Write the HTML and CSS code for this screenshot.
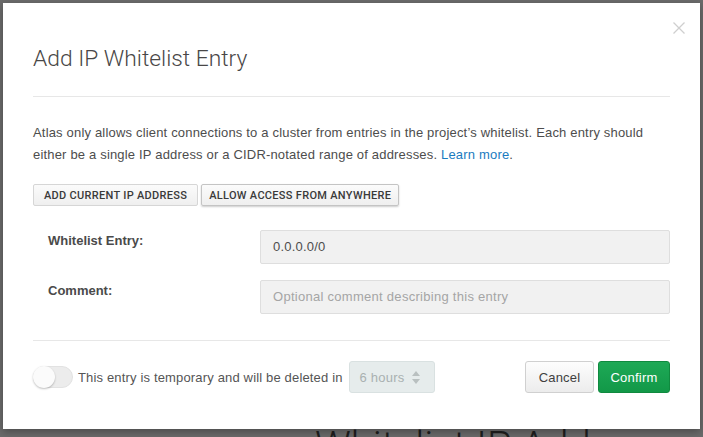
FILE: index.html
```html
<!DOCTYPE html>
<html>
<head>
<meta charset="utf-8">
<link rel="stylesheet" href="styles.css">
</head>
<body>
<div class="backdrop">
  <div class="behind">Whitelist IP Address</div>
  <div class="modal">
    <button class="close" aria-label="Close">
      <svg width="12" height="12" viewBox="0 0 12 12"><path d="M0.5 0.5L11.5 11.5M11.5 0.5L0.5 11.5" stroke="#cfcfcf" stroke-width="1.3" fill="none"/></svg>
    </button>
    <h1 class="title">Add IP Whitelist Entry</h1>
    <div class="rule"></div>
    <p class="desc">Atlas only allows client connections to a cluster from entries in the project’s whitelist. Each entry should either be a single IP address or a CIDR-notated range of addresses. <a class="link">Learn more</a>.</p>
    <div class="quick">
      <button class="qbtn qbtn-current">Add current IP address</button>
      <button class="qbtn active">Allow access from anywhere</button>
    </div>
    <div class="form">
      <div class="row">
        <label class="lbl">Whitelist Entry:</label>
        <div class="input">0.0.0.0/0</div>
      </div>
      <div class="row">
        <label class="lbl">Comment:</label>
        <div class="input placeholder">Optional comment describing this entry</div>
      </div>
    </div>
    <div class="rule rule-foot"></div>
    <div class="footer">
      <div class="temp">
        <span class="toggle"><span class="knob"></span></span>
        <span class="temp-text">This entry is temporary and will be deleted in</span>
        <span class="select">6 hours
          <svg width="8" height="13" viewBox="0 0 8 13"><path d="M4 0L8 5H0Z M4 13L0 8H8Z" fill="#b9c0c0"/></svg>
        </span>
      </div>
      <div class="actions">
        <button class="btn cancel">Cancel</button>
        <button class="btn confirm">Confirm</button>
      </div>
    </div>
  </div>
</div>
</body>
</html>
```
FILE: styles.css
```css
* { box-sizing: border-box; }
html, body { margin: 0; padding: 0; }
body {
  width: 703px;
  height: 437px;
  overflow: hidden;
  background: #6b6b6b;
  font-family: "Liberation Sans", Arial, sans-serif;
}
.backdrop {
  position: relative;
  width: 703px;
  height: 437px;
  overflow: hidden;
  padding: 3px 3px 0 3px;
}
.behind {
  position: absolute;
  left: 315px;
  top: 423px;
  font-family: "Roboto", sans-serif;
  font-weight: 300;
  font-size: 40px;
  line-height: 48px;
  color: #1e1e1e;
  white-space: nowrap;
}
.modal {
  position: relative;
  width: 697px;
  height: 426px;
  background: #fff;
  padding: 0 30px 0 30px;
  box-shadow: 0 3px 8px rgba(0,0,0,0.3);
}
.close {
  position: absolute;
  right: 15px;
  top: 19px;
  border: 0;
  background: none;
  padding: 0;
  width: 12px;
  height: 12px;
  line-height: 0;
}
.title {
  margin: 0;
  padding-top: 41px;
  font-family: "Roboto", sans-serif;
  font-weight: 300;
  font-size: 22.8px;
  line-height: 30px;
  color: #494747;
  height: 83px;
}
.rule {
  height: 1px;
  background: #e7e7e7;
  margin-top: 10px;
}
.desc {
  margin: 25px 0 0 0;
  font-size: 13px;
  line-height: 22px;
  letter-spacing: 0.18px;
  color: #4d4d4d;
}
.link { color: #1a7bc0; text-decoration: none; }
.quick {
  display: flex;
  gap: 3px;
  margin-top: 18px;
}
.qbtn {
  height: 22px;
  padding: 0 7px;
  font-family: "Roboto", sans-serif;
  font-size: 11px;
  font-weight: 500;
  letter-spacing: 0.3px;
  text-transform: uppercase;
  color: #3a3a3a;
  background: linear-gradient(#fbfbfb, #efefef);
  border: 1px solid #d6d6d6;
  border-radius: 2px;
}
.qbtn-current { padding: 0 10px; }
.qbtn.active {
  border-color: #c4c4c4;
  box-shadow: 0 1px 2px rgba(0,0,0,0.2);
}
.form {
  display: flex;
  flex-direction: column;
  gap: 16px;
  margin-top: 24px;
}
.row {
  display: flex;
  align-items: flex-start;
}
.lbl {
  width: 227px;
  padding-left: 15px;
  padding-top: 3px;
  font-size: 13px;
  font-weight: bold;
  color: #4a4a4a;
}
.input {
  flex: 1;
  height: 34px;
  background: #f1f1f1;
  border: 1px solid #dedede;
  border-radius: 2px;
  padding: 0 12px;
  font-size: 13px;
  line-height: 32px;
  letter-spacing: 0.2px;
  color: #4d4d4d;
}
.input.placeholder { color: #a5a5a5; letter-spacing: 0.28px; }
.rule-foot { margin-top: 26px; }
.footer {
  display: flex;
  justify-content: space-between;
  align-items: center;
  margin-top: 20px;
}
.temp {
  display: flex;
  align-items: center;
}
.toggle {
  position: relative;
  width: 40px;
  height: 22px;
  border-radius: 11px;
  background: #ececec;
  border: 1px solid #e2e2e2;
}
.knob {
  position: absolute;
  left: -1px;
  top: -1px;
  width: 22px;
  height: 22px;
  border-radius: 50%;
  background: #fbfbfb;
  box-shadow: 0 1px 2px rgba(0,0,0,0.25);
}
.temp-text {
  margin-left: 5px;
  font-size: 13px;
  letter-spacing: 0.16px;
  color: #555;
}
.select {
  display: flex;
  align-items: center;
  gap: 8px;
  margin-left: 6px;
  width: 86px;
  height: 32px;
  padding: 0 10px;
  background: #e6ecec;
  border: 1px solid #d9e1e1;
  border-radius: 3px;
  font-size: 13px;
  letter-spacing: 0.2px;
  color: #a9b1b1;
}
.actions {
  display: flex;
  gap: 4px;
}
.btn {
  height: 32px;
  padding: 0 10px;
  font-family: "Liberation Sans", Arial, sans-serif;
  font-size: 13px;
  letter-spacing: 0.2px;
  border-radius: 3px;
}
.cancel {
  width: 69px;
  color: #3f3f3f;
  background: linear-gradient(#fdfdfd, #ececec);
  border: 1px solid #d0d0d0;
}
.confirm {
  width: 72px;
  color: #fff;
  background: linear-gradient(#1ea956, #129848);
  border: 1px solid #108a3f;
}
```
